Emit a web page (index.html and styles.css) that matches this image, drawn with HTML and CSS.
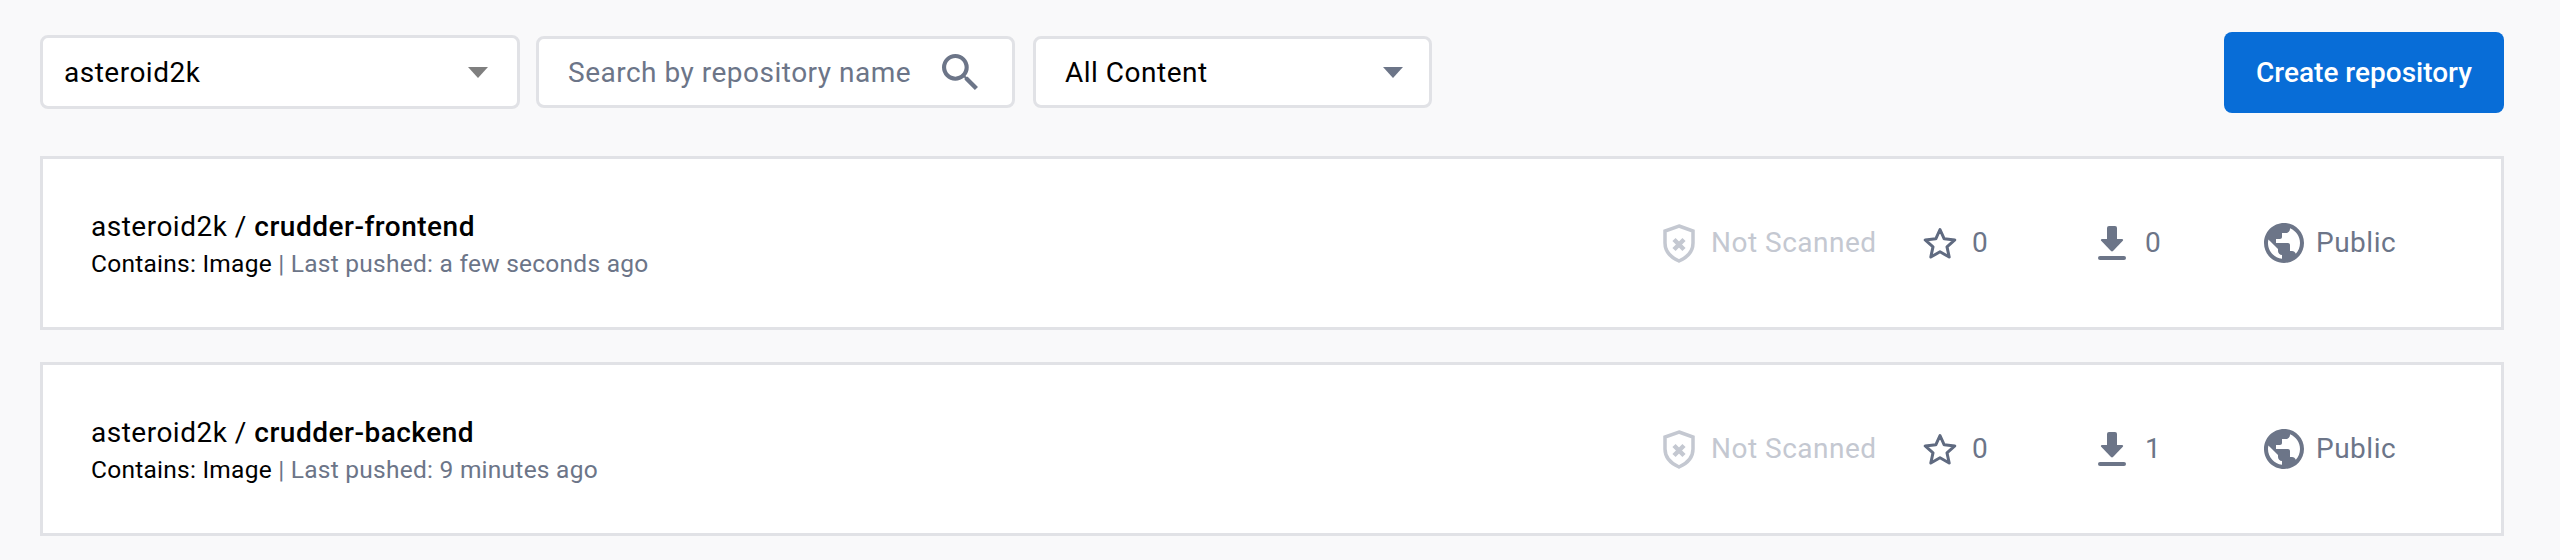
FILE: index.html
```html
<!DOCTYPE html>
<html lang="en">
<head>
    <meta charset="UTF-8">
    <meta name="viewport" content="width=device-width, initial-scale=1.0">
    <title>Repositories</title>
    <link rel="stylesheet" href="styles.css">
</head>
<body>
    <div class="toolbar">
        <div class="field field-namespace">
            <span class="field-value">asteroid2k</span>
            <span class="caret caret-grey"></span>
        </div>
        <div class="field field-search">
            <span class="field-placeholder">Search by repository name</span>
            <svg class="search-icon" viewBox="3 3 17.5 17.5"><path d="M15.5 14h-.79l-.28-.27A6.471 6.471 0 0 0 16 9.5 6.5 6.5 0 1 0 9.5 16c1.61 0 3.09-.59 4.23-1.57l.27.28v.79l5 4.99L20.49 19l-4.99-5zm-6 0C7.01 14 5 11.99 5 9.5S7.01 5 9.5 5 14 7.01 14 9.5 11.99 14 9.5 14z"/></svg>
        </div>
        <div class="field field-content">
            <span class="field-value">All Content</span>
            <span class="caret"></span>
        </div>
        <button class="create-button">Create repository</button>
    </div>

    <div class="repo-list">
        <div class="repo">
            <div class="repo-info">
                <div class="repo-name">asteroid2k / <strong>crudder-frontend</strong></div>
                <div class="repo-meta">Contains: Image <span class="repo-pushed">| Last pushed: a few seconds ago</span></div>
            </div>
            <div class="repo-stats">
                <div class="stat stat-scan">
                    <svg class="icon-shield" viewBox="0 0 32 39"><path d="M16 2 30 7V19C30 28 24 33.5 16 37 8 33.5 2 28 2 19V7Z"/><path class="shield-x" d="M11 15.500 21 25.500M21 15.500 11 25.500"/></svg>
                    <span>Not Scanned</span>
                </div>
                <div class="stat stat-stars">
                    <svg class="icon-star" viewBox="0 0 34 32"><path d="M17 2.5 21.2 11.8 31.8 12.9 24 19.9 26.2 30 17 24.8 7.8 30 10 19.9 2.2 12.9 12.8 11.8Z"/></svg>
                    <span>0</span>
                </div>
                <div class="stat stat-pulls">
                    <svg class="icon-download" viewBox="0 0 28 34"><rect x="9" y="0" width="10" height="15" rx="2"/><path d="M4 13H24C25 13 25.5 14 24.8 14.8L15 25C14.4 25.6 13.6 25.6 13 25L3.200 14.800C2.500 14 3 13 4 13Z"/><rect x="0" y="30" width="28" height="4" rx="2"/></svg>
                    <span>0</span>
                </div>
                <div class="stat stat-public">
                    <svg class="icon-globe" viewBox="2 2 20 20"><path d="M12 2C6.48 2 2 6.48 2 12s4.48 10 10 10 10-4.48 10-10S17.52 2 12 2zm-1 17.930c-3.950-.49-7-3.850-7-7.930 0-.62.08-1.210.21-1.790L9 15v1c0 1.100.9 2 2 2v1.930zm6.900-2.540c-.26-.81-1-1.390-1.900-1.390h-1v-3c0-.55-.45-1-1-1H8v-2h2c.55 0 1-.45 1-1V7h2c1.100 0 2-.9 2-2v-.41c2.930 1.190 5 4.060 5 7.410 0 2.080-.8 3.970-2.100 5.390z"/></svg>
                    <span>Public</span>
                </div>
            </div>
        </div>
        <div class="repo">
            <div class="repo-info">
                <div class="repo-name">asteroid2k / <strong>crudder-backend</strong></div>
                <div class="repo-meta">Contains: Image <span class="repo-pushed">| Last pushed: 9 minutes ago</span></div>
            </div>
            <div class="repo-stats">
                <div class="stat stat-scan">
                    <svg class="icon-shield" viewBox="0 0 32 39"><path d="M16 2 30 7V19C30 28 24 33.5 16 37 8 33.5 2 28 2 19V7Z"/><path class="shield-x" d="M11 15.500 21 25.500M21 15.500 11 25.500"/></svg>
                    <span>Not Scanned</span>
                </div>
                <div class="stat stat-stars">
                    <svg class="icon-star" viewBox="0 0 34 32"><path d="M17 2.5 21.2 11.8 31.8 12.9 24 19.9 26.2 30 17 24.8 7.8 30 10 19.9 2.2 12.9 12.8 11.8Z"/></svg>
                    <span>0</span>
                </div>
                <div class="stat stat-pulls">
                    <svg class="icon-download" viewBox="0 0 28 34"><rect x="9" y="0" width="10" height="15" rx="2"/><path d="M4 13H24C25 13 25.5 14 24.8 14.8L15 25C14.4 25.6 13.6 25.6 13 25L3.200 14.800C2.500 14 3 13 4 13Z"/><rect x="0" y="30" width="28" height="4" rx="2"/></svg>
                    <span>1</span>
                </div>
                <div class="stat stat-public">
                    <svg class="icon-globe" viewBox="2 2 20 20"><path d="M12 2C6.48 2 2 6.48 2 12s4.48 10 10 10 10-4.48 10-10S17.52 2 12 2zm-1 17.930c-3.950-.49-7-3.850-7-7.930 0-.62.08-1.210.21-1.790L9 15v1c0 1.100.9 2 2 2v1.930zm6.900-2.540c-.26-.81-1-1.390-1.900-1.390h-1v-3c0-.55-.45-1-1-1H8v-2h2c.55 0 1-.45 1-1V7h2c1.100 0 2-.9 2-2v-.41c2.930 1.190 5 4.060 5 7.410 0 2.080-.8 3.970-2.100 5.390z"/></svg>
                    <span>Public</span>
                </div>
            </div>
        </div>
    </div>
</body>
</html>
```

FILE: styles.css
```css
body {
    margin: 0;
    padding: 32px 56px 0 40px;
    height: 560px;
    box-sizing: border-box;
    overflow: hidden;
    background-color: #f9f9fa;
    font-family: Roboto, sans-serif;
    color: #000;
}
.toolbar {
    display: flex;
    align-items: center;
    height: 81px;
    margin-bottom: 43px;
}
.field {
    display: flex;
    align-items: center;
    justify-content: space-between;
    box-sizing: border-box;
    height: 72px;
    margin-bottom: 1px;
    padding: 0 26px 0 21px;
    background-color: #fff;
    border: 3px solid #e1e2e6;
    border-radius: 8px;
    font-size: 28px;
    letter-spacing: 0.5px;
}
.field-namespace {
    width: 480px;
    height: 74px;
    margin-right: 16px;
    padding-right: 29px;
}
.field-search {
    width: 479px;
    margin-right: 18px;
    padding: 0 34px 0 29px;
}
.field-content {
    width: 399px;
    padding-left: 29px;
}
.field-placeholder {
    color: #6c7588;
}
.search-icon {
    width: 36px;
    height: 36px;
    fill: #6c7588;
}
.caret {
    width: 0;
    height: 0;
    border-left: 10px solid transparent;
    border-right: 10px solid transparent;
    border-top: 11px solid #6c7588;
}
.caret-grey {
    border-top-color: #7f7f7f;
}
.create-button {
    width: 280px;
    height: 81px;
    margin-left: auto;
    background-color: #086dd7;
    color: #fff;
    border: none;
    border-radius: 8px;
    font-family: Roboto, sans-serif;
    font-size: 28px;
    font-weight: 500;
}
.repo-list {
    display: flex;
    flex-direction: column;
    gap: 32px;
}
.repo {
    display: flex;
    align-items: center;
    justify-content: space-between;
    box-sizing: border-box;
    height: 174px;
    padding: 0 47px 0 48px;
    background-color: #fff;
    border: 3px solid #e1e2e6;
}
.repo-info {
    margin-top: 4px;
}
.repo-name {
    font-size: 28px;
    line-height: 37px;
    letter-spacing: 0.5px;
}
.repo-name strong {
    font-weight: 500;
}
.repo-meta {
    font-size: 24.5px;
    line-height: 37px;
    letter-spacing: 0.25px;
}
.repo-pushed {
    color: #6c7588;
}
.repo-stats {
    display: flex;
    align-items: center;
}
.stat {
    display: flex;
    align-items: center;
    font-size: 28px;
    letter-spacing: 0.5px;
    color: #6c7588;
}
.stat span {
    padding-bottom: 2px;
}
.stat-scan {
    width: 260px;
    gap: 16px;
    color: #c4c8d1;
}
.stat-stars {
    width: 175px;
    gap: 15px;
}
.stat-pulls {
    width: 166px;
    gap: 19px;
}
.stat-public {
    width: 190px;
    gap: 12px;
}
.icon-shield {
    width: 32px;
    height: 39px;
    fill: none;
    stroke: #c4c8d1;
    stroke-width: 3.5;
}
.shield-x {
    stroke-width: 4.5;
}
.icon-star {
    width: 34px;
    height: 32px;
    fill: none;
    stroke: #5f6a80;
    stroke-width: 3;
    stroke-linejoin: round;
}
.icon-download {
    width: 28px;
    height: 34px;
    fill: #6c7588;
}
.icon-globe {
    width: 40px;
    height: 40px;
    fill: #6c7588;
}
```
